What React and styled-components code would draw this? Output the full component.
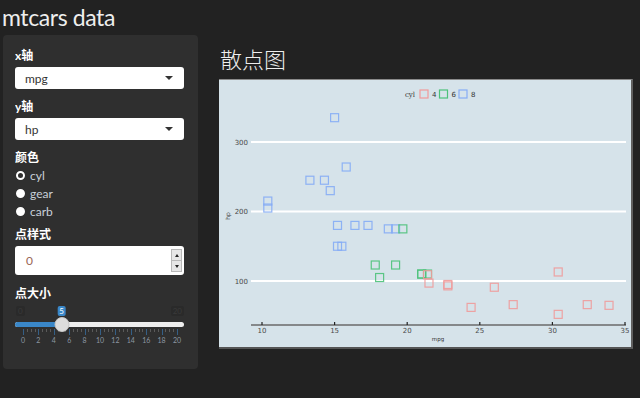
import React from "react";
import styled, { createGlobalStyle } from "styled-components";

const GlobalStyle = createGlobalStyle`
  body {
    margin: 0;
    background: #222222;
    font-family: Lato, "Noto Sans CJK SC", sans-serif;
    color: #ffffff;
  }
`;

const Page = styled.div`
  width: 640px;
  height: 398px;
  overflow: hidden;
`;

const Title = styled.h2`
  margin: 0;
  padding: 3px 0 0 2px;
  height: 32px;
  font-size: 23px;
  font-weight: 400;
  line-height: 28px;
  letter-spacing: -0.4px;
  color: #eeeeee;
`;

const Row = styled.div`
  display: flex;
  align-items: flex-start;
  padding-left: 3px;
`;

const Well = styled.div`
  width: 195px;
  box-sizing: border-box;
  padding: 13px 14px 20px 12px;
  background: #2f2f2f;
  border-radius: 4px;
`;

const Group = styled.div`
  margin-bottom: ${p => (p.gap === undefined ? 10 : p.gap)}px;
`;

const Label = styled.div`
  height: 16px;
  font-size: 12px;
  font-weight: 700;
  line-height: 16px;
  margin-bottom: ${p => (p.tight ? 0 : 3)}px;
  color: #ffffff;
  overflow: hidden;
`;

const Select = styled.div`
  height: 22px;
  box-sizing: border-box;
  background: #ffffff;
  border-radius: 3px;
  display: flex;
  align-items: center;
  justify-content: space-between;
  padding: 0 11px 0 10px;
  font-size: 12px;
  color: #333333;
`;

const Caret = styled.span`
  width: 0;
  height: 0;
  border-left: 4px solid transparent;
  border-right: 4px solid transparent;
  border-top: 4px solid #333333;
`;

const RadioRow = styled.div`
  display: flex;
  align-items: center;
  height: 18px;
  font-size: 12px;
  color: #c9d1d9;
`;

const RadioDot = styled.span`
  width: 9px;
  height: 9px;
  box-sizing: border-box;
  border-radius: 50%;
  margin: 0 5px 0 1px;
  background: ${p => (p.checked ? "#2f2f2f" : "#ffffff")};
  border: 2px solid #ffffff;
`;

const NumberBox = styled.div`
  height: 29px;
  box-sizing: border-box;
  background: #ffffff;
  border-radius: 3px;
  display: flex;
  align-items: center;
  justify-content: space-between;
  padding: 0 2px 0 11px;
  font-size: 12px;
  color: #9a6656;
`;

const Spinner = styled.div`
  display: flex;
  flex-direction: column;
  width: 9px;
  border: 1px solid #b8b8b8;
  background: #e6e6e6;
`;

const SpinBtn = styled.div`
  height: 10px;
  display: flex;
  align-items: center;
  justify-content: center;
  & + & {
    border-top: 1px solid #b8b8b8;
  }
  &::after {
    content: "";
    border-left: 2px solid transparent;
    border-right: 2px solid transparent;
    ${p =>
      p.up
        ? "border-bottom: 3px solid #222;"
        : "border-top: 3px solid #222;"}
  }
`;

const SliderWrap = styled.div`
  position: relative;
  height: 44px;
`;

const EdgeTag = styled.span`
  position: absolute;
  top: 1px;
  ${p => (p.right ? "right: 0;" : "left: 1px;")}
  padding: 0 2px;
  height: 10px;
  line-height: 10px;
  font-size: 8px;
  color: #3a3a3a;
  background: #2a2a2a;
  border-radius: 2px;
`;

const Bubble = styled.span`
  position: absolute;
  top: 1px;
  transform: translateX(-50%);
  padding: 0 2px;
  height: 10px;
  line-height: 10px;
  font-size: 8px;
  color: #ffffff;
  background: #3a87c8;
  border-radius: 2px;
`;

const Track = styled.div`
  position: absolute;
  top: 17px;
  left: 0;
  right: 0;
  height: 5px;
  border-radius: 3px;
  background: #eeeeee;
  overflow: hidden;
`;

const Fill = styled.div`
  height: 100%;
  background: #3a87c8;
`;

const Thumb = styled.span`
  position: absolute;
  top: 12px;
  width: 15px;
  height: 15px;
  box-sizing: border-box;
  transform: translateX(-50%);
  border-radius: 50%;
  background: #dddddd;
  border: 1px solid #c4c4c4;
`;

const Tick = styled.span`
  position: absolute;
  top: 24px;
  width: 1px;
  height: ${p => (p.major ? 6 : 3)}px;
  background: ${p => (p.major ? "#355f86" : "#5a5a5a")};
`;

const TickLabel = styled.span`
  position: absolute;
  top: 31px;
  transform: translateX(-50%);
  font-size: 7px;
  line-height: 8px;
  color: #8d97a3;
`;

const Main = styled.div`
  margin-left: 21px;
  width: 414px;
`;

const MainTitle = styled.h3`
  margin: 12px 0 6px 1px;
  height: 26px;
  font-size: 22px;
  line-height: 26px;
  font-weight: 300;
  color: #eeeeee;
`;

const Plot = styled.div`
  width: 414px;
  height: 270px;
  box-sizing: border-box;
  background: #d6e3ea;
  border-top: 1px solid #8a8a8a;
  border-right: 2px solid #606060;
  border-bottom: 2px solid #555555;
  svg {
    display: block;
  }
`;

const cars = [
  [21.0, 110, 6], [21.0, 110, 6], [22.8, 93, 4], [21.4, 110, 6],
  [18.7, 175, 8], [18.1, 105, 6], [14.3, 245, 8], [24.4, 62, 4],
  [22.8, 95, 4], [19.2, 123, 6], [17.8, 123, 6], [16.4, 180, 8],
  [17.3, 180, 8], [15.2, 180, 8], [10.4, 205, 8], [10.4, 215, 8],
  [14.7, 230, 8], [32.4, 66, 4], [30.4, 52, 4], [33.9, 65, 4],
  [21.5, 97, 4], [15.5, 150, 8], [15.2, 150, 8], [13.3, 245, 8],
  [19.2, 175, 8], [27.3, 66, 4], [26.0, 91, 4], [30.4, 113, 4],
  [15.8, 264, 8], [19.7, 175, 6], [15.0, 335, 8], [21.4, 109, 4],
];

const cylColor = { 4: "#f09a9a", 6: "#4cc27a", 8: "#85acf5" };

const xs = mpg => 43 + (mpg - 10) * 14.52;
const ys = hp => 62 + (300 - hp) * 0.695;

const Scatter = () => (
  <svg width="412" height="267" viewBox="0 0 412 267">
    {[100, 200, 300].map(v => (
      <g key={v}>
        <line x1="32" x2="407" y1={ys(v)} y2={ys(v)} stroke="#ffffff" strokeWidth="2" />
        <text x="29" y={ys(v) + 2.5} fontSize="7" fontFamily="DejaVu Sans" fill="#4a4a4a" textAnchor="end">
          {v}
        </text>
      </g>
    ))}
    <line x1="32" x2="407" y1="245" y2="245" stroke="#6a6a6a" strokeWidth="1.6" />
    {[10, 15, 20, 25, 30, 35].map(v => (
      <g key={v}>
        <line x1={xs(v)} x2={xs(v)} y1="242" y2="245" stroke="#222" strokeWidth="1.2" />
        <text x={xs(v)} y="252.5" fontSize="7" fontFamily="DejaVu Sans" fill="#4a4a4a" textAnchor="middle">
          {v}
        </text>
      </g>
    ))}
    <text x="219" y="261" fontSize="5.5" fontFamily="DejaVu Sans" fill="#333" textAnchor="middle">
      mpg
    </text>
    <text
      x="0"
      y="0"
      fontSize="6"
      fontFamily="DejaVu Sans"
      fill="#333"
      textAnchor="middle"
      transform="translate(11 136) rotate(-90)"
    >
      hp
    </text>
    <text x="196" y="16.5" fontSize="7" fontFamily="DejaVu Serif" fill="#333" textAnchor="end">
      cyl
    </text>
    {[4, 6, 8].map((c, i) => (
      <g key={c}>
        <rect x={201 + i * 19.5} y="10" width="8" height="8" fill="none" stroke={cylColor[c]} strokeWidth="1.2" />
        <text x={213 + i * 19.5} y="16.5" fontSize="7" fontFamily="DejaVu Sans" fill="#333">
          {c}
        </text>
      </g>
    ))}
    {cars.map(([mpg, hp, cyl], i) => (
      <rect
        key={i}
        x={xs(mpg) - 4}
        y={ys(hp) - 4}
        width="8"
        height="8"
        fill="none"
        stroke={cylColor[cyl]}
        strokeWidth="1.2"
        opacity="0.9"
      />
    ))}
  </svg>
);

const sliderPos = v => 8 + v * 7.7;

const SizeSlider = ({ value }) => (
  <SliderWrap>
    <EdgeTag>0</EdgeTag>
    <EdgeTag right>20</EdgeTag>
    <Track>
      <Fill style={{ width: sliderPos(value) }} />
    </Track>
    {Array.from({ length: 41 }, (_, i) => (
      <Tick key={i} major={i % 4 === 0} style={{ left: sliderPos(i / 2) }} />
    ))}
    {Array.from({ length: 11 }, (_, i) => (
      <TickLabel key={i} style={{ left: sliderPos(i * 2) }}>
        {i * 2}
      </TickLabel>
    ))}
    <Bubble style={{ left: sliderPos(value) }}>{value}</Bubble>
    <Thumb style={{ left: sliderPos(value) }} />
  </SliderWrap>
);

export default function App() {
  return (
    <Page>
      <GlobalStyle />
      <Title>mtcars data</Title>
      <Row>
        <Well>
          <Group>
            <Label>x轴</Label>
            <Select>
              mpg
              <Caret />
            </Select>
          </Group>
          <Group>
            <Label>y轴</Label>
            <Select>
              hp
              <Caret />
            </Select>
          </Group>
          <Group gap={7}>
            <Label tight>颜色</Label>
            <RadioRow>
              <RadioDot checked />
              cyl
            </RadioRow>
            <RadioRow>
              <RadioDot />
              gear
            </RadioRow>
            <RadioRow>
              <RadioDot />
              carb
            </RadioRow>
          </Group>
          <Group gap={11}>
            <Label>点样式</Label>
            <NumberBox>
              0
              <Spinner>
                <SpinBtn up />
                <SpinBtn />
              </Spinner>
            </NumberBox>
          </Group>
          <Group gap={0}>
            <Label>点大小</Label>
            <SizeSlider value={5} />
          </Group>
        </Well>
        <Main>
          <MainTitle>散点图</MainTitle>
          <Plot>
            <Scatter />
          </Plot>
        </Main>
      </Row>
    </Page>
  );
}
